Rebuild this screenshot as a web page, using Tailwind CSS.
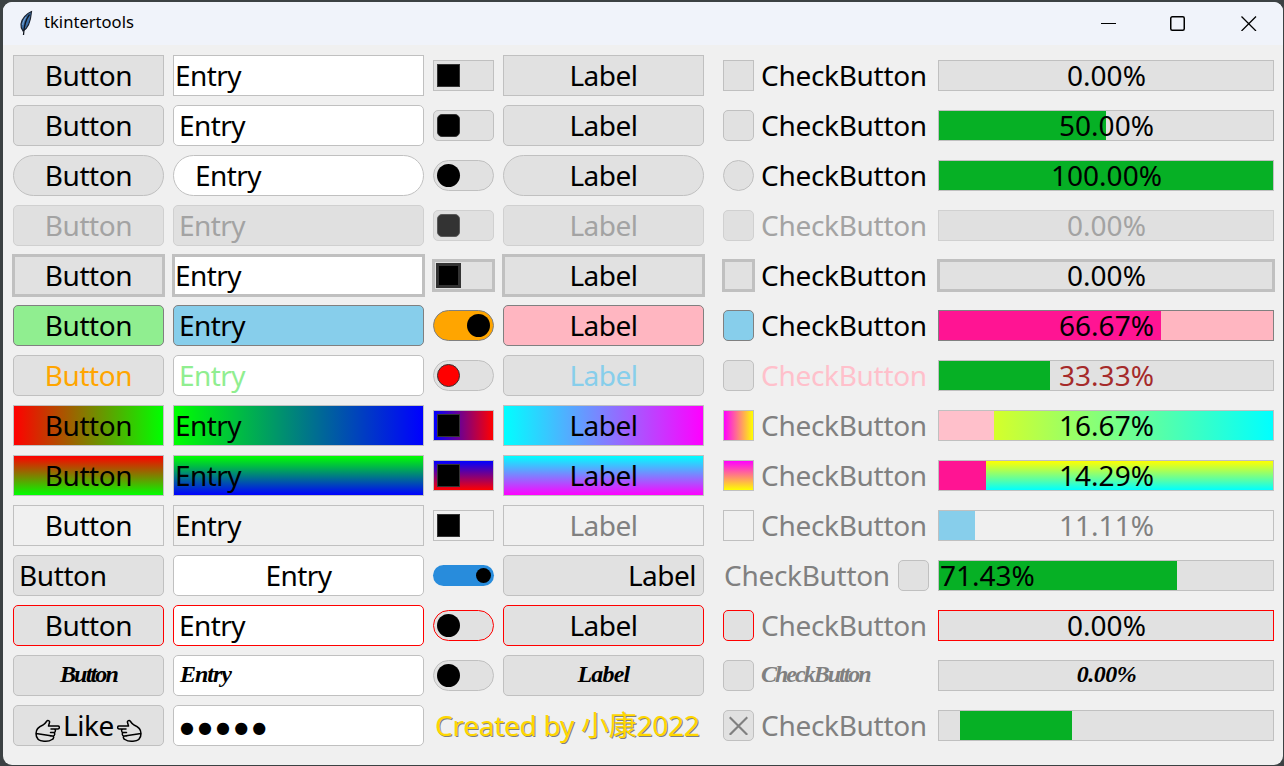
<!DOCTYPE html>
<html lang="en">
<head>
<meta charset="utf-8">
<title>tkintertools</title>
<script src="https://cdn.jsdelivr.net/npm/@tailwindcss/browser@4"></script>
</head>
<body class="h-[766px] w-[1284px] overflow-hidden bg-[#3c4143] pt-[2px] pr-px pb-px pl-[3px] font-['Noto_Sans','Noto_Sans_CJK_SC',sans-serif] text-black">
<div class="flex h-[763px] w-[1280px] flex-col overflow-hidden rounded-[9px] bg-[#f0f0f0]">
  <header class="flex h-[43px] shrink-0 items-center bg-[#f0f3fa]">
    <svg class="mb-[2px] ml-[15px] h-[26px] w-[18px]" viewBox="0 0 18 26">
      <path d="M13.500 1.500C9 3 3.500 9 3 14c-.300 3 .500 5 2 7 4-2 7.500-8 8.500-19.500Z" fill="#3a6ea8" stroke="#1d2430" stroke-width="1.200"/>
      <path d="M11.500 4.500C8 9 6 15 5.500 25" fill="none" stroke="#10151c" stroke-width="1.300"/>
      <path d="M8 7c-2 3-3 5-3.300 8" fill="none" stroke="#8db4dc" stroke-width=".800"/>
    </svg>
    <h1 class="mb-[3px] ml-[8px] text-[16.600px] leading-6 whitespace-nowrap">tkintertools</h1>
    <div class="mr-[26px] mb-[2px] ml-auto flex items-center">
      <svg class="mr-[53px] size-4" viewBox="0 0 16 16"><path d="M0 8.500H15" stroke="#000" fill="none"/></svg>
      <svg class="mr-[55px] size-4" viewBox="0 0 16 16"><rect x=".750" y="1.750" width="13.500" height="13.500" rx="1.500" stroke="#000" stroke-width="1.500" fill="none"/></svg>
      <svg class="size-4" viewBox="0 0 16 16"><path d="M.500 1.500 15 16M15 1.500.500 16" stroke="#000" stroke-width="1.300" fill="none"/></svg>
    </div>
  </header>

  <main class="flex pt-[10px] pl-[10px] text-[28px] leading-[39px] whitespace-nowrap">
    <!-- Buttons -->
    <section class="flex w-[151px] flex-col gap-[9px] tracking-[-0.400px] *:h-[41px] *:text-center">
      <div class="border border-[#c0c0c0] bg-[#e1e1e1]">Button</div>
      <div class="rounded-[5px] border border-[#c0c0c0] bg-[#e1e1e1]">Button</div>
      <div class="rounded-full border border-[#c0c0c0] bg-[#e1e1e1]">Button</div>
      <div class="rounded-[5px] border border-[#d0d0d0] bg-[#e0e0e0] text-[#a3a3a3]">Button</div>
      <div class="border border-[#c0c0c0] bg-[#e1e1e1] ring-1 ring-[#c0c0c0] inset-ring-1 inset-ring-[#c0c0c0]">Button</div>
      <div class="rounded-[5px] border border-[#808080] bg-[#90ee90]">Button</div>
      <div class="rounded-[5px] border border-[#c0c0c0] bg-[#e1e1e1] text-[#ffa500]">Button</div>
      <div class="border border-[#c0c0c0] bg-[linear-gradient(to_right,#f00,#0f0)]">Button</div>
      <div class="border border-[#c0c0c0] bg-[linear-gradient(to_bottom,#f00,#0f0)]">Button</div>
      <div class="border border-[#c0c0c0]">Button</div>
      <div class="flex rounded-[5px] border border-[#c0c0c0] bg-[#e1e1e1] pl-[5px]">Button</div>
      <div class="rounded-[5px] border border-[#f00] bg-[#e1e1e1]">Button</div>
      <div class="rounded-[5px] border border-[#c0c0c0] bg-[#e1e1e1] font-['Brush_Script_MT','Liberation_Serif',serif] text-[24px] leading-[37px] font-bold tracking-[-1.800px] italic">Button</div>
      <div class="flex items-center justify-center rounded-[5px] border border-[#c0c0c0] bg-[#e1e1e1]">
        <svg class="mt-[10px] h-[24px] w-[25px]" viewBox="0 0 25 24" fill="none" stroke="#000" stroke-width="1.500" stroke-linejoin="round" stroke-linecap="round"><path d="M1 14.500C1 10 4 7.500 8 6c1.500-.600 2.500-2 3.500-3.500 1-1.800 3.500-.800 3 1L13.500 7H23c1.800 0 1.800 3 0 3h-7M19 10c2 0 1.800 3.500 0 3.500h-3.500M18.500 13.500c1.800 0 1.500 3.500-.300 3.500H15M17.500 17c1.800 0 1.300 3.300-.500 3.500-2 1.500-5 2-8 1.700C4 22 1 19 1 14.500Z"/></svg>
        <span class="mx-[3px]">Like</span>
        <svg class="mt-[10px] h-[24px] w-[25px] -scale-x-100" viewBox="0 0 25 24" fill="none" stroke="#000" stroke-width="1.500" stroke-linejoin="round" stroke-linecap="round"><path d="M1 14.500C1 10 4 7.500 8 6c1.500-.600 2.500-2 3.500-3.500 1-1.800 3.500-.800 3 1L13.500 7H23c1.800 0 1.800 3 0 3h-7M19 10c2 0 1.800 3.500 0 3.500h-3.500M18.500 13.500c1.800 0 1.500 3.500-.300 3.500H15M17.500 17c1.800 0 1.300 3.300-.500 3.500-2 1.500-5 2-8 1.700C4 22 1 19 1 14.500Z"/></svg>
      </div>
    </section>

    <!-- Entries -->
    <section class="ml-[9px] flex w-[251px] flex-col gap-[9px] tracking-[-0.600px] *:h-[41px]">
      <div class="border border-[#c0c0c0] bg-white pl-px">Entry</div>
      <div class="rounded-[5px] border border-[#c0c0c0] bg-white pl-[5px]">Entry</div>
      <div class="rounded-full border border-[#c0c0c0] bg-white pl-[21px]">Entry</div>
      <div class="rounded-[5px] border border-[#d0d0d0] bg-[#e0e0e0] pl-[5px] text-[#a3a3a3]">Entry</div>
      <div class="border border-[#c0c0c0] bg-white pl-px ring-1 ring-[#c0c0c0] inset-ring-1 inset-ring-[#c0c0c0]">Entry</div>
      <div class="rounded-[5px] border border-[#808080] bg-[#87ceeb] pl-[5px]">Entry</div>
      <div class="rounded-[5px] border border-[#c0c0c0] bg-white pl-[5px] text-[#90ee90]">Entry</div>
      <div class="border border-[#c0c0c0] bg-[linear-gradient(to_right,#0f0,#00f)] pl-px">Entry</div>
      <div class="border border-[#c0c0c0] bg-[linear-gradient(to_bottom,#0f0,#00f)] pl-px">Entry</div>
      <div class="border border-[#c0c0c0] pl-px">Entry</div>
      <div class="rounded-[5px] border border-[#c0c0c0] bg-white text-center">Entry</div>
      <div class="rounded-[5px] border border-[#f00] bg-white pl-[5px]">Entry</div>
      <div class="rounded-[5px] border border-[#c0c0c0] bg-white pl-[6px] font-['Brush_Script_MT','Liberation_Serif',serif] text-[24px] leading-[37px] font-bold tracking-[-1px] italic">Entry</div>
      <div class="rounded-[5px] border border-[#c0c0c0] bg-white pl-[6px] font-['DejaVu_Sans',sans-serif] text-[16px] leading-[43px] tracking-[4.100px]">●●●●●</div>
    </section>

    <!-- Switches -->
    <section class="mt-[5px] ml-[9px] flex w-[61px] flex-col gap-[19px]">
      <div class="flex h-[31px] border border-[#c0c0c0] bg-[#e1e1e1] p-[3px]"><i class="size-[23px] border border-[#333] bg-black"></i></div>
      <div class="flex h-[31px] rounded-[5px] border border-[#c0c0c0] bg-[#e1e1e1] p-[3px]"><i class="size-[23px] rounded-[5px] border border-[#333] bg-black"></i></div>
      <div class="flex h-[31px] rounded-full border border-[#c0c0c0] bg-[#e1e1e1] p-[3px]"><i class="size-[23px] rounded-full bg-black"></i></div>
      <div class="flex h-[31px] rounded-[5px] border border-[#d0d0d0] bg-[#e0e0e0] p-[3px]"><i class="size-[23px] rounded-[5px] border border-[#5a5a5a] bg-[#333]"></i></div>
      <div class="flex h-[31px] border border-[#c0c0c0] bg-[#e1e1e1] p-[3px] ring-1 ring-[#c0c0c0] inset-ring-1 inset-ring-[#c0c0c0]"><i class="size-[23px] border border-[#333] bg-black ring-1 ring-[#333] inset-ring-1 inset-ring-[#333]"></i></div>
      <div class="flex h-[31px] justify-end rounded-full border border-[#808080] bg-[#ffa500] p-[3px]"><i class="size-[23px] rounded-full bg-black"></i></div>
      <div class="flex h-[31px] rounded-full border border-[#c0c0c0] bg-[#e1e1e1] p-[3px]"><i class="size-[23px] rounded-full border border-[#333] bg-[#f00]"></i></div>
      <div class="flex h-[31px] border border-[#c0c0c0] bg-[linear-gradient(to_right,#00f,#f00)] p-[3px]"><i class="size-[23px] border border-[#333] bg-black"></i></div>
      <div class="flex h-[31px] border border-[#c0c0c0] bg-[linear-gradient(to_bottom,#00f,#f00)] p-[3px]"><i class="size-[23px] border border-[#333] bg-black"></i></div>
      <div class="flex h-[31px] border border-[#c0c0c0] p-[3px]"><i class="size-[23px] border border-[#333] bg-black"></i></div>
      <div class="my-[5px] flex h-[21px] justify-end rounded-full bg-[#288cdc] p-[3px]"><i class="size-[15px] rounded-full bg-black"></i></div>
      <div class="flex h-[31px] rounded-full border border-[#f00] bg-[#e1e1e1] p-[3px]"><i class="size-[23px] rounded-full bg-black"></i></div>
      <div class="flex h-[31px] rounded-full border border-[#c0c0c0] bg-[#e1e1e1] p-[3px]"><i class="size-[23px] rounded-full bg-black"></i></div>
      <p class="-mt-[5px] ml-[2px] h-[41px] leading-[41px] tracking-[-0.250px] text-[#ffd700] [text-shadow:1px_1px_0_#808080]">Created by 小康2022</p>
    </section>

    <!-- Labels -->
    <section class="ml-[9px] flex w-[201px] flex-col gap-[9px] tracking-[-0.500px] *:h-[41px] *:text-center">
      <div class="border border-[#c0c0c0] bg-[#e1e1e1]">Label</div>
      <div class="rounded-[5px] border border-[#c0c0c0] bg-[#e1e1e1]">Label</div>
      <div class="rounded-full border border-[#c0c0c0] bg-[#e1e1e1]">Label</div>
      <div class="rounded-[5px] border border-[#d0d0d0] bg-[#e0e0e0] text-[#a3a3a3]">Label</div>
      <div class="border border-[#c0c0c0] bg-[#e1e1e1] ring-1 ring-[#c0c0c0] inset-ring-1 inset-ring-[#c0c0c0]">Label</div>
      <div class="rounded-[5px] border border-[#808080] bg-[#ffb6c1]">Label</div>
      <div class="rounded-[5px] border border-[#c0c0c0] bg-[#e1e1e1] text-[#87ceeb]">Label</div>
      <div class="border border-[#c0c0c0] bg-[linear-gradient(to_right,#0ff,#f0f)]">Label</div>
      <div class="border border-[#c0c0c0] bg-[linear-gradient(to_bottom,#0ff,#f0f)]">Label</div>
      <div class="border border-[#c0c0c0] text-[#808080]">Label</div>
      <div class="flex justify-end rounded-[5px] border border-[#c0c0c0] bg-[#e1e1e1] pr-[7px]">Label</div>
      <div class="rounded-[5px] border border-[#f00] bg-[#e1e1e1]">Label</div>
      <div class="rounded-[5px] border border-[#c0c0c0] bg-[#e1e1e1] font-['Brush_Script_MT','Liberation_Serif',serif] text-[24px] leading-[37px] font-bold tracking-[-0.800px] italic">Label</div>
    </section>

    <!-- Check buttons -->
    <section class="ml-[19px] flex w-[206px] flex-col gap-[9px] tracking-[-0.300px] text-[#808080] *:flex *:h-[41px] *:items-center *:gap-[7px]">
      <div class="text-black"><i class="size-[31px] border border-[#c0c0c0] bg-[#e1e1e1]"></i>CheckButton</div>
      <div class="text-black"><i class="size-[31px] rounded-[5px] border border-[#c0c0c0] bg-[#e1e1e1]"></i>CheckButton</div>
      <div class="text-black"><i class="size-[31px] rounded-full border border-[#c0c0c0] bg-[#e1e1e1]"></i>CheckButton</div>
      <div class="text-[#a3a3a3]"><i class="size-[31px] rounded-[5px] border border-[#d0d0d0] bg-[#e0e0e0]"></i>CheckButton</div>
      <div class="text-black"><i class="size-[31px] border border-[#c0c0c0] bg-[#e1e1e1] ring-1 ring-[#c0c0c0] inset-ring-1 inset-ring-[#c0c0c0]"></i>CheckButton</div>
      <div class="text-black"><i class="size-[31px] rounded-[5px] border border-[#808080] bg-[#87ceeb]"></i>CheckButton</div>
      <div class="text-[#ffc0cb]"><i class="size-[31px] rounded-[5px] border border-[#c0c0c0] bg-[#e1e1e1]"></i>CheckButton</div>
      <div><i class="size-[31px] border border-[#c0c0c0] bg-[linear-gradient(to_right,#f0f,#ff0)]"></i>CheckButton</div>
      <div><i class="size-[31px] border border-[#c0c0c0] bg-[linear-gradient(to_bottom,#f0f,#ff0)]"></i>CheckButton</div>
      <div><i class="size-[31px] border border-[#c0c0c0]"></i>CheckButton</div>
      <div class="justify-between pl-px">CheckButton<i class="size-[31px] rounded-[5px] border border-[#c0c0c0] bg-[#e1e1e1]"></i></div>
      <div><i class="size-[31px] rounded-[5px] border border-[#f00] bg-[#e1e1e1]"></i>CheckButton</div>
      <div><i class="size-[31px] rounded-[5px] border border-[#c0c0c0] bg-[#e1e1e1]"></i><span class="pb-[2px] font-['Brush_Script_MT','Liberation_Serif',serif] text-[24px] leading-[37px] font-bold tracking-[-2px] italic">CheckButton</span></div>
      <div><i class="flex size-[31px] items-center justify-center rounded-[5px] border border-[#c0c0c0] bg-[#e1e1e1]"><svg class="mr-px mb-px size-[19px]" viewBox="0 0 19 19"><path d="M.700 1.200 18.300 18.800M18.300 1.200.700 18.800" stroke="#808080" stroke-width="2.200" fill="none"/></svg></i>CheckButton</div>
    </section>

    <!-- Progress bars -->
    <section class="mt-[5px] ml-[9px] flex w-[336px] flex-col gap-[19px] text-center leading-[29px] *:h-[31px] *:pl-px">
      <div class="border border-[#c0c0c0] bg-[#e1e1e1]">0.00%</div>
      <div class="border border-[#c0c0c0] bg-[linear-gradient(to_right,#06b025_50%,#e1e1e1_50%)]">50.00%</div>
      <div class="border border-[#c0c0c0] bg-[#06b025]">100.00%</div>
      <div class="border border-[#d0d0d0] bg-[#e0e0e0] text-[#a3a3a3]">0.00%</div>
      <div class="border border-[#c0c0c0] bg-[#e1e1e1] ring-1 ring-[#c0c0c0] inset-ring-1 inset-ring-[#c0c0c0]">0.00%</div>
      <div class="border border-[#808080] bg-[linear-gradient(to_right,#ff1493_222px,#ffb6c1_222px)]">66.67%</div>
      <div class="border border-[#c0c0c0] bg-[linear-gradient(to_right,#06b025_111px,#e1e1e1_111px)] text-[#a52a2a]">33.33%</div>
      <div class="border border-[#c0c0c0] bg-[linear-gradient(to_right,#ffc0cb_55px,transparent_55px),linear-gradient(to_right,#ff0,#0ff)]">16.67%</div>
      <div class="border border-[#c0c0c0] bg-[linear-gradient(to_right,#ff1493_47px,transparent_47px),linear-gradient(to_bottom,#ff0,#0ff)]">14.29%</div>
      <div class="border border-[#c0c0c0] bg-[linear-gradient(to_right,#87ceeb_36px,transparent_36px)] text-[#808080]">11.11%</div>
      <div class="flex border border-[#c0c0c0] bg-[linear-gradient(to_right,#06b025_238px,#e1e1e1_238px)]">71.43%</div>
      <div class="border border-[#f00] bg-[#e1e1e1]">0.00%</div>
      <div class="border border-[#c0c0c0] bg-[#e1e1e1] font-['Brush_Script_MT','Liberation_Serif',serif] text-[24px] leading-[26px] font-bold tracking-[-0.500px] italic">0.00%</div>
      <div class="border border-[#c0c0c0] bg-[linear-gradient(to_right,#e1e1e1_21px,#06b025_21px,#06b025_133px,#e1e1e1_133px)]"></div>
    </section>
  </main>
</div>
</body>
</html>
